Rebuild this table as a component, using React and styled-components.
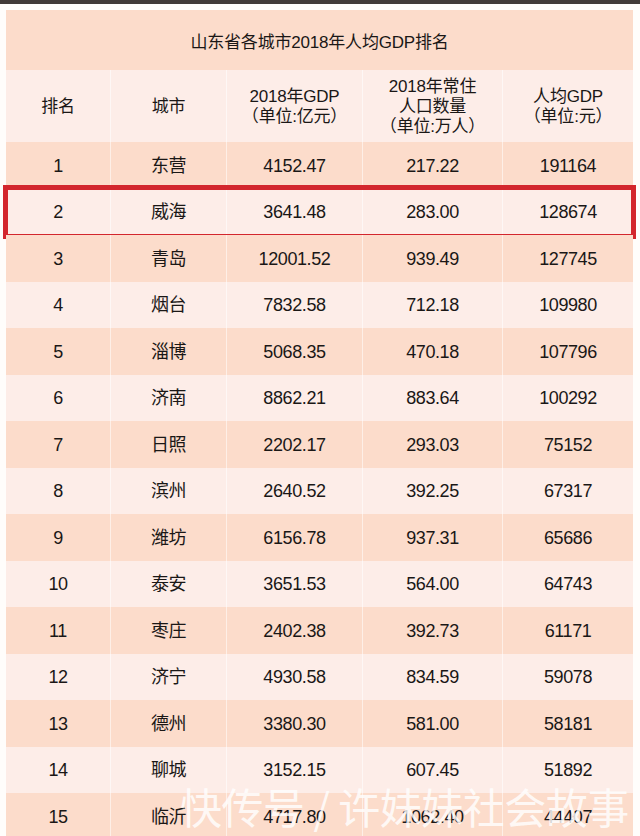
import React from 'react';
import styled, { createGlobalStyle } from 'styled-components';

const GlobalStyle = createGlobalStyle`
  html, body {
    margin: 0;
    padding: 0;
    background: #ffffff;
    overflow: hidden;
  }
  body {
    font-family: "Liberation Sans", "Noto Sans CJK SC", sans-serif;
    color: #1a1716;
  }
`;

const colors = {
    peach: '#fcdccb',
    pink: '#fdede8',
    divider: 'rgba(255, 255, 255, 0.55)',
    red: '#d3262d',
    topBar: '#423b38',
};

const Page = styled.div`
  width: 640px;
  height: 836px;
  position: relative;
  overflow: hidden;
  background: #fffdfb;
`;

const TopBar = styled.div`
  height: 4px;
  background: ${colors.topBar};
`;

const TableWrapper = styled.div`
  padding: 6px 7px 0 6px;
`;

const Table = styled.div`
  display: grid;
  grid-template-columns: 104px 116px 136px 140px 131px;
`;

const TitleCell = styled.div`
  grid-column: 1 / -1;
  height: 60px;
  display: flex;
  align-items: center;
  justify-content: center;
  background: ${colors.peach};
  font-size: 17px;
  letter-spacing: -0.2px;
`;

const Row = styled.div`
  grid-column: 1 / -1;
  display: grid;
  grid-template-columns: subgrid;
  height: ${({ $height }) => $height}px;
  background: ${({ $light }) => ($light ? colors.pink : colors.peach)};
  position: relative;
`;

const Cell = styled.div`
  display: flex;
  align-items: center;
  justify-content: center;
  text-align: center;
  font-size: ${({ $head }) => ($head ? 17 : 18)}px;
  line-height: 20px;
  letter-spacing: ${({ $head }) => ($head ? '-0.2px' : '-0.4px')};
  white-space: pre-line;
  padding-top: 1px;
  border-left: 1px solid ${colors.divider};
  &:first-child {
    border-left: none;
  }
`;

const Highlight = styled.div`
  position: absolute;
  left: -3px;
  right: -3px;
  top: -4px;
  bottom: -4px;
  border: 5px solid ${colors.red};
  pointer-events: none;
`;

const Watermark = styled.div`
  position: absolute;
  left: 180px;
  top: 780px;
  font-family: "Noto Sans CJK SC", sans-serif;
  font-size: 42px;
  line-height: 52px;
  color: rgba(255, 255, 255, 0.82);
  white-space: nowrap;
  letter-spacing: -0.5px;
`;

const headers = ['排名', '城市', '2018年GDP\n（单位:亿元）', '2018年常住\n人口数量\n（单位:万人）', '人均GDP\n（单位:元）'];

const rows = [
    ['1', '东营', '4152.47', '217.22', '191164'],
    ['2', '威海', '3641.48', '283.00', '128674'],
    ['3', '青岛', '12001.52', '939.49', '127745'],
    ['4', '烟台', '7832.58', '712.18', '109980'],
    ['5', '淄博', '5068.35', '470.18', '107796'],
    ['6', '济南', '8862.21', '883.64', '100292'],
    ['7', '日照', '2202.17', '293.03', '75152'],
    ['8', '滨州', '2640.52', '392.25', '67317'],
    ['9', '潍坊', '6156.78', '937.31', '65686'],
    ['10', '泰安', '3651.53', '564.00', '64743'],
    ['11', '枣庄', '2402.38', '392.73', '61171'],
    ['12', '济宁', '4930.58', '834.59', '59078'],
    ['13', '德州', '3380.30', '581.00', '58181'],
    ['14', '聊城', '3152.15', '607.45', '51892'],
    ['15', '临沂', '4717.80', '1062.40', '44407'],
];

export default function App() {
    return (
        <Page>
            <GlobalStyle />
            <TopBar />
            <TableWrapper>
                <Table>
                    <TitleCell>山东省各城市2018年人均GDP排名</TitleCell>
                    <Row $height={72} $light>
                        {headers.map((h) => (
                            <Cell key={h} $head>{h}</Cell>
                        ))}
                    </Row>
                    {rows.map((r, i) => (
                        <Row key={r[0]} $height={46.5} $light={i % 2 === 1}>
                            {r.map((v, j) => (
                                <Cell key={j}>{v}</Cell>
                            ))}
                            {r[0] === '2' && <Highlight />}
                        </Row>
                    ))}
                </Table>
            </TableWrapper>
            <Watermark>快传号 / 许妹妹社会故事</Watermark>
        </Page>
    );
}
